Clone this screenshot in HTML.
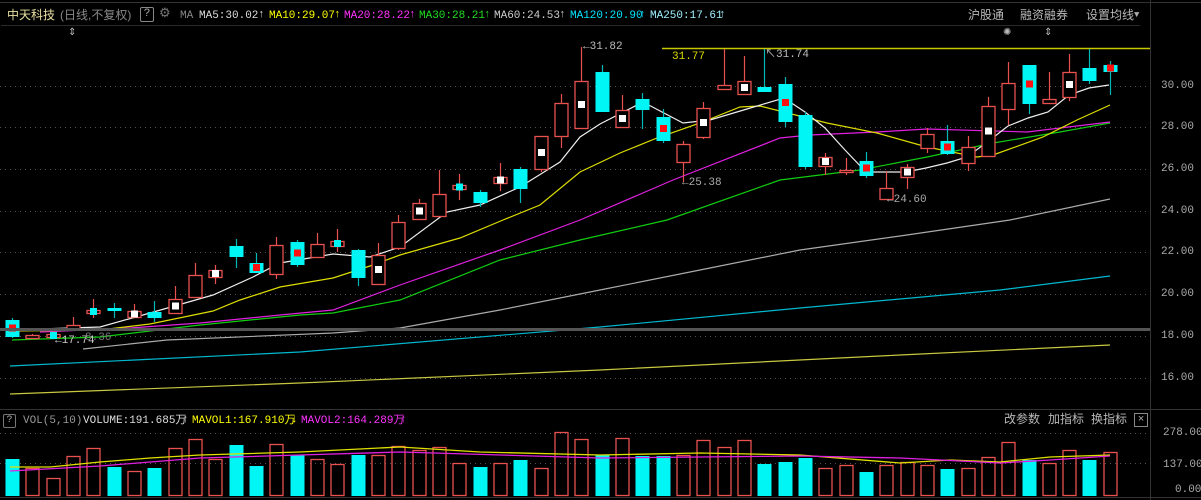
<!DOCTYPE html>
<html><head><meta charset="utf-8">
<style>
html,body{margin:0;padding:0;background:#000;width:1201px;height:500px;overflow:hidden}
body{position:relative;font-family:"Liberation Mono","Noto Sans CJK SC",monospace;font-size:11px}
.t{position:absolute;white-space:nowrap;line-height:12px}
.cj{font-family:"Liberation Sans","Noto Sans CJK SC",sans-serif;font-size:12px;color:#b8b8b8}
svg{position:absolute;left:0;top:0}
</style></head><body>
<svg id="s" width="1201" height="500" xmlns="http://www.w3.org/2000/svg">
<rect width="1201" height="500" fill="#000"/>
<!-- top tab strip -->
<line x1="0" y1="2.5" x2="1201" y2="2.5" stroke="#333"/>
<line x1="1" y1="25.5" x2="1140" y2="25.5" stroke="#2a2a2a"/>
<line x1="1150.5" y1="0" x2="1150.5" y2="500" stroke="#333"/>
<line x1="0" y1="409.5" x2="1201" y2="409.5" stroke="#333"/>
<line x1="0" y1="497.5" x2="1201" y2="497.5" stroke="#333"/>
<g id="grid" stroke="#555" stroke-dasharray="1,4"></g>
<g id="lines" fill="none" stroke-width="1.2"></g>
<g id="cand"></g>
<g id="vol"></g>
</svg>
<div class="t cj" style="left:7px;top:9px;color:#e8e0a0">中天科技</div>
<div class="t cj" style="left:60px;top:9px;color:#888">(日线,不复权)</div>
<div class="t" style="left:140px;top:7px;width:12px;height:13px;border:1px solid #888;border-radius:2px;color:#aaa;text-align:center;line-height:13px">?</div>
<div class="t" style="left:159px;top:8px;color:#777;font-size:13px">⚙</div>
<div class="t" style="left:180px;top:10px;color:#888">MA</div>
<div class="t" style="left:199px;top:10px;color:#ddd">MA5:30.02</div><div class="t" style="left:258px;top:9px;color:#ddd">↑</div>
<div class="t" style="left:269px;top:10px;color:#ffff00">MA10:29.07</div><div class="t" style="left:334px;top:9px;color:#ffff00">↑</div>
<div class="t" style="left:344px;top:10px;color:#ff33ff">MA20:28.22</div><div class="t" style="left:409px;top:9px;color:#ff33ff">↑</div>
<div class="t" style="left:419px;top:10px;color:#22dd22">MA30:28.21</div><div class="t" style="left:484px;top:9px;color:#22dd22">↑</div>
<div class="t" style="left:494px;top:10px;color:#ccc">MA60:24.53</div><div class="t" style="left:559px;top:9px;color:#ccc">↑</div>
<div class="t" style="left:570px;top:10px;color:#00e5ff">MA120:20.90</div><div class="t" style="left:639px;top:9px;color:#00e5ff">↑</div>
<div class="t" style="left:650px;top:10px;color:#9fefff">MA250:17.61</div><div class="t" style="left:719px;top:9px;color:#9fefff">↑</div>
<div class="t cj" style="left:968px;top:9px">沪股通</div>
<div class="t cj" style="left:1020px;top:9px">融资融券</div>
<div class="t cj" style="left:1086px;top:9px">设置均线</div>
<div class="t" style="left:1134px;top:9px;color:#aaa;font-size:9px">▼</div>
<div class="t" style="left:68px;top:28px;color:#bbb;font-size:10px">⇕</div>
<div class="t" style="left:1003px;top:28px;color:#bbb;font-size:10px">✺</div>
<div class="t" style="left:1044px;top:28px;color:#bbb;font-size:10px">⇕</div>
<!-- price labels -->
<div class="t" style="left:1161px;top:80px;color:#aaa">30.00</div>
<div class="t" style="left:1161px;top:121px;color:#aaa">28.00</div>
<div class="t" style="left:1161px;top:163px;color:#aaa">26.00</div>
<div class="t" style="left:1161px;top:205px;color:#aaa">24.00</div>
<div class="t" style="left:1161px;top:246px;color:#aaa">22.00</div>
<div class="t" style="left:1161px;top:288px;color:#aaa">20.00</div>
<div class="t" style="left:1161px;top:330px;color:#aaa">18.00</div>
<div class="t" style="left:1161px;top:372px;color:#aaa">16.00</div>
<div class="t" style="left:583px;top:41px;color:#bbb">←31.82</div>
<div class="t" style="left:672px;top:51px;color:#dddd00">31.77</div>
<div class="t" style="left:765px;top:49px;color:#bbb">↖31.74</div>
<div class="t" style="left:682px;top:177px;color:#aaa">←25.38</div>
<div class="t" style="left:887px;top:194px;color:#aaa">←24.60</div>
<div class="t" style="left:55px;top:335px;color:#ccc">←17.74</div>
<div class="t" style="left:85px;top:332px;color:#777">8.36</div>
<!-- volume header -->
<div class="t" style="left:3px;top:414px;width:11px;height:12px;border:1px solid #777;border-radius:2px;color:#aaa;text-align:center;line-height:12px;font-size:10px">?</div>
<div class="t" style="left:23px;top:415px;color:#999">VOL(5,10)</div>
<div class="t" style="left:83px;top:415px;color:#ddd">VOLUME:191.685万</div><div class="t" style="left:182px;top:414px;color:#ddd">↑</div>
<div class="t" style="left:192px;top:415px;color:#ffff00">MAVOL1:167.910万</div><div class="t" style="left:291px;top:414px;color:#ffff00">↓</div>
<div class="t" style="left:301px;top:415px;color:#ff33ff">MAVOL2:164.289万</div><div class="t" style="left:400px;top:414px;color:#ff33ff">↑</div>
<div class="t cj" style="left:1004px;top:413px">改参数</div>
<div class="t cj" style="left:1048px;top:413px">加指标</div>
<div class="t cj" style="left:1091px;top:413px">换指标</div>
<div class="t" style="left:1134px;top:413px;width:12px;height:12px;border:1px solid #888;color:#aaa;text-align:center;line-height:12px">×</div>
<div class="t" style="left:1163px;top:427px;color:#aaa">278.00</div>
<div class="t" style="left:1163px;top:459px;color:#aaa">137.00</div>
<div class="t" style="left:1175px;top:484px;color:#aaa">0.00</div>
<script>
var NS="http://www.w3.org/2000/svg";
function el(p,n,a){var e=document.createElementNS(NS,n);for(var k in a)e.setAttribute(k,a[k]);p.appendChild(e);return e;}
var s=document.getElementById('s'),g=document.getElementById('grid'),L=document.getElementById('lines'),C=document.getElementById('cand'),V=document.getElementById('vol');
[86,127,169,211,252,294,336,378,433,463].forEach(function(y){el(g,'line',{x1:0,y1:y+.5,x2:1150,y2:y+.5});});
el(s,'line',{x1:0,y1:329.5,x2:1150,y2:329.5,stroke:'#555','stroke-width':3});
el(s,'line',{x1:662,y1:48.5,x2:1150,y2:48.5,stroke:'#c8c800','stroke-width':1.5});
s.insertBefore(s.lastChild,L);s.insertBefore(s.lastChild.previousSibling||s.lastChild,L);
function pl(pts,c,w){el(L,'polyline',{points:pts,stroke:c,'stroke-width':w||1.2});}
pl("10,394 300,383 600,370 900,355 1110,345","#c8c840");
pl("10,366 300,352 600,327 800,308 1000,290 1110,276","#00b8d0");
pl("83,349 167,340 333,333 400,328 500,310 600,290 700,270 800,250 900,236 1010,220 1110,199","#aaa");
pl("12,340 100,337 200,325 300,315 333,313 400,300 500,260 580,240 667,220 780,180 860,170 927,157 993,143 1060,132 1110,123","#11cc11");
pl("40,332 130,328 200,323 280,315 333,310 400,285 500,250 580,220 673,180 780,138 810,135 877,132 927,129 1027,132 1110,122","#e020e0");
pl("10,331 100,330 150,324 213,311 240,300 280,287 333,278 370,266 400,255 460,238 503,220 540,205 580,172 620,153 657,138 700,123 740,107 760,106 827,123 877,133 927,147 977,157 993,155 1043,137 1077,120 1110,105","#dddd00");
pl("10,330 100,327 150,313 213,295 253,277 280,263 333,254 370,257 400,247 447,212 480,205 520,187 560,162 580,137 600,124 643,102 683,123 710,120 747,109 784,98 805,112 825,128 845,150 866,172 906,172 926,168 947,163 967,157 990,140 1008,126 1028,118 1048,112 1069,95 1089,88 1109,85","#eee");
// candles: [bodyTop,bodyBot,high,low,up(1)/down(0),mark]
var D=[[320,336,318,338,0,'r'],[335,338,334,339,1],[334,337,331,338,1,'c'],[325,329,317,330,1],[310,313,299,318,1,'c'],[308,310,303,318,0],[311,317,304,318,1,'w'],[312,317,301,322,0],[299,313,286,314,1,'w'],[275,297,263,298,1],
[270,277,265,284,1,'w'],[246,256,239,268,0],[263,272,253,273,0,'r'],[245,274,237,279,1],[242,264,240,267,0,'r'],[244,257,233,258,1],[241,246,229,252,1,'c'],[250,277,249,286,0],[255,284,243,285,1,'w'],[222,248,215,250,1],
[203,219,199,220,1,'w'],[194,216,170,217,1],[185,189,174,200,1,'c'],[192,202,190,207,0],[177,183,163,191,1,'w'],[169,188,167,203,0],[136,169,136,172,1,'w'],[103,136,94,148,1],[81,128,47,129,1,'w'],[72,111,65,112,0],
[110,127,95,128,1,'w'],[99,109,93,129,0],[117,140,109,143,0,'r'],[144,162,141,182,1],[108,137,102,139,1,'w'],[85,89,49,90,1],[81,94,56,95,1,'w'],[87,91,49,91,0],[84,121,77,127,0,'r'],[115,166,112,169,0],
[157,166,153,175,1,'w'],[170,172,158,175,1],[161,175,152,178,0,'r'],[188,199,171,200,1],[167,177,164,189,1,'w'],[134,148,128,153,1],[141,153,125,155,0,'r'],[147,163,136,171,1],[106,156,97,157,1,'w'],[83,109,62,125,1],
[65,103,65,114,0,'r'],[99,103,72,104,1],[72,97,54,101,1,'w'],[68,80,49,84,0],[65,71,61,95,0,'r']];
var RED="#e8514f",CY="#00f5f5";
D.forEach(function(d,k){var x=Math.round(12+20.33*k);var c=d[4]?RED:CY;
 el(C,'line',{x1:x+.5,y1:d[2],x2:x+.5,y2:d[3],stroke:d[4]?RED:'#00b8b8','stroke-width':1.2});
 var h=Math.max(d[1]-d[0],1);
 if(d[4])el(C,'rect',{x:x-6,y:d[0]+.5,width:13,height:h,fill:'#000',stroke:RED,'stroke-width':1.3});
 else el(C,'rect',{x:x-6.5,y:d[0],width:14,height:h+1,fill:CY});
 if(d[5]){var mc=d[5]=='r'?'#ff1010':d[5]=='w'?'#fff':CY;el(C,'rect',{x:x-3,y:(d[0]+d[1])/2-3.5,width:7,height:7,fill:mc});}
});
var VT=[459,468,478,456,448,467,471,468,448,439,459,445,466,444,455,459,464,455,455,446,450,447,463,467,463,460,468,432,439,455,438,456,456,455,440,447,440,464,462,458,468,465,472,465,462,465,469,468,457,442,460,463,450,460,452];
VT.forEach(function(t,k){var x=Math.round(12+20.33*k);var up=D[k][4]||k==54;
 if(up)el(V,'rect',{x:x-6,y:t+.5,width:13,height:495-t,fill:'none',stroke:RED,'stroke-width':1.3});
 else el(V,'rect',{x:x-6.5,y:t,width:14,height:496-t,fill:CY});});
el(V,'polyline',{points:"10,467 50,467 100,462 150,458 200,455 300,452 400,447 480,452 600,455 700,453 800,455 900,463 950,460 1000,462 1050,457 1110,455",fill:'none',stroke:'#e0e000','stroke-width':1.3});
el(V,'polyline',{points:"10,471 100,466 200,458 300,455 400,452 600,458 800,456 900,458 1000,463 1050,460 1110,456",fill:'none',stroke:'#e020e0','stroke-width':1.3});
</script>
</body></html>
